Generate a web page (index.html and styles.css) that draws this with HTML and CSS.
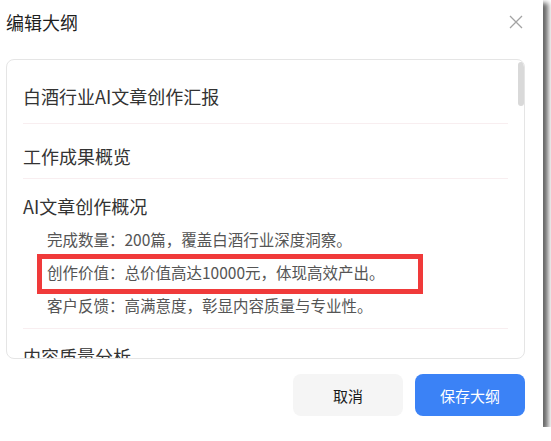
FILE: index.html
```html
<!DOCTYPE html>
<html lang="zh-CN">
<head>
    <meta charset="UTF-8">
    <meta name="viewport" content="width=device-width, initial-scale=1.0">
    <title>编辑大纲</title>
    <link rel="stylesheet" href="styles.css">
</head>
<body>
    <div class="dialog">
        <div class="dialog-header">
            <h2 class="dialog-title">编辑大纲</h2>
            <button class="close-btn" aria-label="关闭">
                <svg width="14" height="14" viewBox="0 0 14 14">
                    <path d="M1 1L13 13M13 1L1 13" stroke="#a3a3a3" stroke-width="1.3" fill="none"/>
                </svg>
            </button>
        </div>

        <div class="outline-box">
            <div class="outline-list">
                <div class="outline-item title">
                    <div class="outline-heading">白酒行业AI文章创作汇报</div>
                </div>
                <div class="outline-item">
                    <div class="outline-heading">工作成果概览</div>
                </div>
                <div class="outline-item has-sub">
                    <div class="outline-heading">AI文章创作概况</div>
                    <div class="outline-sub">完成数量：200篇，覆盖白酒行业深度洞察。</div>
                    <div class="outline-sub marked">创作价值：总价值高达10000元，体现高效产出。</div>
                    <div class="outline-sub">客户反馈：高满意度，彰显内容质量与专业性。</div>
                </div>
                <div class="outline-item has-sub">
                    <div class="outline-heading">内容质量分析</div>
                </div>
            </div>
            <div class="scroll-thumb"></div>
        </div>

        <div class="dialog-footer">
            <button class="btn btn-cancel">取消</button>
            <button class="btn btn-primary">保存大纲</button>
        </div>
    </div>
</body>
</html>
```

FILE: styles.css
```css
body {
    margin: 0;
    background: #ffffff;
    font-family: "Noto Sans CJK SC", "Noto Sans", sans-serif;
}

.dialog {
    width: 543px;
    height: 427px;
    box-sizing: border-box;
    padding: 0 18px 11px 6px;
    background: #ffffff;
    box-shadow: 5px 3px 5px rgba(0, 0, 0, 0.6);
    display: flex;
    flex-direction: column;
}

.dialog-header {
    height: 59px;
    display: flex;
    justify-content: space-between;
    align-items: flex-start;
    padding-top: 9px;
    box-sizing: border-box;
}

.dialog-title {
    margin: 0;
    font-size: 18px;
    font-weight: normal;
    line-height: 26px;
    color: #1f1f1f;
}

.close-btn {
    background: none;
    border: none;
    padding: 0;
    margin: 6px 2px 0 0;
    width: 14px;
    height: 14px;
    cursor: pointer;
}

.close-btn svg {
    display: block;
}

.outline-box {
    position: relative;
    height: 300px;
    box-sizing: border-box;
    border: 1px solid #e5e5e5;
    border-radius: 8px;
    overflow: hidden;
}

.outline-list {
    padding: 4px 16px 0 16px;
}

.scroll-thumb {
    position: absolute;
    top: 2px;
    right: 0;
    width: 6px;
    height: 44px;
    border-radius: 3px;
    background: #d9d9d9;
}

.outline-item {
    padding: 16px 0 5px;
    border-bottom: 1px solid #f8eef0;
}

.outline-item.title {
    padding-bottom: 10px;
}

.outline-item.has-sub {
    padding: 11px 0 6px;
}

.outline-heading {
    font-size: 18px;
    line-height: 33px;
    color: #333333;
}

.outline-sub {
    position: relative;
    padding-left: 24px;
    font-size: 15.5px;
    line-height: 33px;
    color: #555555;
}

.outline-sub.marked::after {
    content: "";
    position: absolute;
    left: 14px;
    top: -2px;
    width: 386px;
    height: 40px;
    box-sizing: border-box;
    border: 5px solid #f03a3a;
}

.dialog-footer {
    margin-top: auto;
    display: flex;
    justify-content: flex-end;
    gap: 12px;
}

.btn {
    width: 110px;
    height: 42px;
    border: none;
    border-radius: 8px;
    font-family: inherit;
    font-size: 15px;
    cursor: pointer;
}

.btn-cancel {
    background: #f5f5f5;
    color: #1a1a1a;
}

.btn-primary {
    background: #3b82f6;
    color: #ffffff;
}
```
